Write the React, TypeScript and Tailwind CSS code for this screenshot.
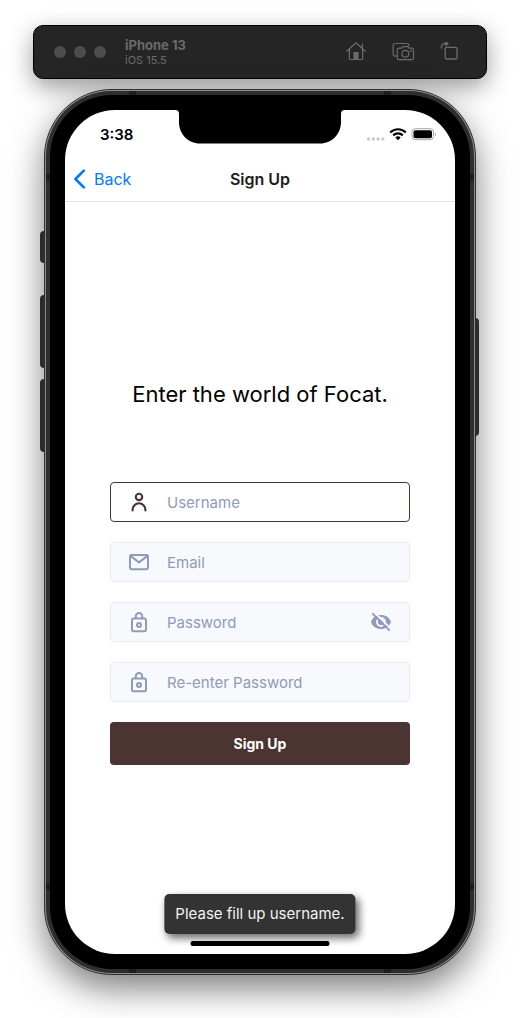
import { useState } from "react";
import type { ReactNode } from "react";

function PersonIcon() {
  return (
    <svg viewBox="0 0 24 24" className="size-6" fill="none" stroke="currentColor" strokeWidth="2.1" strokeLinecap="round" aria-hidden="true">
      <circle cx="12" cy="6.900" r="3.200" />
      <path d="M5.600 20.400v-.7a6.400 6.400 0 0 1 12.800 0v.7" />
    </svg>
  );
}

function MailIcon() {
  return (
    <svg viewBox="0 0 24 24" className="size-6" fill="none" stroke="currentColor" strokeWidth="2" strokeLinejoin="round" aria-hidden="true">
      <rect x="3" y="5" width="18" height="14.200" rx="1.400" />
      <path d="M3.200 5.600 12 12.400l8.800-6.800" />
    </svg>
  );
}

function LockIcon() {
  return (
    <svg viewBox="0 0 24 24" className="size-6" fill="none" stroke="currentColor" strokeWidth="2" aria-hidden="true">
      <rect x="5" y="8.600" width="14" height="12.600" rx="1.600" />
      <path d="M8.800 8.600V6.200a3.200 3.200 0 0 1 6.400 0v2.400" />
      <circle cx="12" cy="15" r="2" />
    </svg>
  );
}

function EyeIcon({ slashed }: { slashed: boolean }) {
  return (
    <svg viewBox="0 0 24 24" className="size-6" fill="none" aria-hidden="true">
      <path d="M2 12C3.600 7.600 7.400 5 12 5s8.400 2.600 10 7c-1.600 4.400-5.400 7-10 7s-8.400-2.600-10-7z" fill="currentColor" />
      <circle cx="12" cy="12" r="4" stroke="#f7f9fd" strokeWidth="1.900" />
      {slashed && (
        <>
          <path d="m5.500 2.300 17 17" stroke="#f7f9fd" strokeWidth="1.800" />
          <path d="m3.300 3.300 17.400 17.400" stroke="currentColor" strokeWidth="1.900" />
        </>
      )}
    </svg>
  );
}

function HomeIcon() {
  return (
    <svg viewBox="0 0 20 20" className="size-5" fill="none" stroke="currentColor" strokeWidth="1.200" strokeLinecap="round" strokeLinejoin="round" aria-hidden="true">
      <path d="M.8 9.200 10 .8l9.200 8.400M3.400 7.200v9.400a.9.9 0 0 0 .9.9h11.400a.9.9 0 0 0 .9-.9V7.200M16.300 6.200V2" />
      <path d="M8 17.200v-6.600h4v6.600z" fill="currentColor" />
    </svg>
  );
}

function ScreenshotIcon() {
  return (
    <svg viewBox="0 0 22 20" className="h-5 w-6" fill="none" stroke="currentColor" strokeWidth="1.200" strokeLinejoin="round" aria-hidden="true">
      <path d="M4.800 14.100H3.100A2 2 0 0 1 1.100 12.100V3.500a2 2 0 0 1 2-2h11.800a2 2 0 0 1 2 2v.8" />
      <path d="M7.100 6.100h2.500l1.200-1.500h5l1.200 1.500h2.700a1.800 1.800 0 0 1 1.800 1.800v8a1.800 1.800 0 0 1-1.800 1.800H7.100a1.800 1.800 0 0 1-1.800-1.800v-8a1.800 1.800 0 0 1 1.800-1.800z" />
      <circle cx="13.400" cy="11.700" r="3.400" />
      <circle cx="18.800" cy="8.700" r=".4" />
    </svg>
  );
}

function RotateIcon() {
  return (
    <svg viewBox="0 0 20 20" className="size-5" fill="none" stroke="currentColor" strokeWidth="1.300" strokeLinecap="round" strokeLinejoin="round" aria-hidden="true">
      <rect x="5.200" y="5.400" width="11.800" height="11.600" rx="1.400" />
      <path d="M1.400 6.100V4.700A3.200 3.200 0 0 1 4.600 1.500h2.400" />
      <path d="M5.700 0 8 1.500 5.700 3.400z" fill="currentColor" />
    </svg>
  );
}

function Notch() {
  return (
    <svg viewBox="0 0 170 34" className="absolute top-0 left-1/2 h-[34px] w-[170px] -translate-x-1/2" aria-hidden="true">
      <path d="M0 0c3 0 4 1.500 4 4v8c0 12 9 21.500 21 21.500h120c12 0 21-9.500 21-21.500V4c0-2.500 1-4 4-4z" fill="#000" />
    </svg>
  );
}

function StatusIcons() {
  return (
    <svg viewBox="0 0 72 16" className="h-4 w-[72px]" aria-hidden="true">
      <g fill="#c9c9c9">
        <circle cx="3.500" cy="12" r="1.700" />
        <circle cx="8.300" cy="12" r="1.700" />
        <circle cx="13.100" cy="12" r="1.700" />
        <circle cx="17.900" cy="12" r="1.700" />
      </g>
      <g fill="none" stroke="#000" strokeWidth="2.200">
        <path d="M25.200 5.500a11 11 0 0 1 15.600 0" />
        <path d="M28.200 8.400a6.800 6.800 0 0 1 9.600 0" />
      </g>
      <path d="m33 13.200-2.700-2.700a3.800 3.800 0 0 1 5.400 0z" />
      <rect x="47" y="1.700" width="21.500" height="11" rx="3.200" fill="none" stroke="#a6a6a6" />
      <rect x="48.500" y="3.200" width="18.500" height="8" rx="1.800" />
      <path d="M70 5.400c1.300.4 1.300 3.200 0 3.600z" fill="#a6a6a6" />
    </svg>
  );
}

type FieldProps = {
  id: string;
  label: string;
  type?: string;
  active?: boolean;
  icon: ReactNode;
  children?: ReactNode;
};

function Field({ id, label, type = "text", active = false, icon, children }: FieldProps) {
  const look = active
    ? "border-[#4b3331] bg-white text-[#4b3331]"
    : "border-[#e8ecf6] bg-[#f7f9fd] text-[#8f9bb8]";
  return (
    <div className={`flex h-10 items-center rounded border px-4 ${look}`}>
      <label htmlFor={id} className="flex">{icon}</label>
      <input
        id={id}
        type={type}
        aria-label={label}
        placeholder={label}
        className="ml-4 h-full min-w-0 flex-1 bg-transparent text-[15px] text-[#222b45] outline-none placeholder:text-[#8f9bb8]"
      />
      {children}
    </div>
  );
}

function SimulatorBar() {
  return (
    <header className="flex h-[54px] w-full max-w-[454px] items-center rounded-[10px] border border-black bg-[#252525] px-5 text-[#6b6b6b] shadow-[0_8px_24px_rgba(0,0,0,0.4)]">
      <div className="flex gap-2">
        <span className="size-3 rounded-full bg-[#4d4d4d]" />
        <span className="size-3 rounded-full bg-[#4d4d4d]" />
        <span className="size-3 rounded-full bg-[#4d4d4d]" />
      </div>
      <div className="ml-[19px] flex-1">
        <p className="text-[13px] leading-4 font-bold">iPhone 13</p>
        <p className="text-[11px] leading-[14px]">iOS 15.5</p>
      </div>
      <div className="flex items-center gap-[25px] pr-[6px]">
        <button type="button" aria-label="Home"><HomeIcon /></button>
        <button type="button" aria-label="Screenshot"><ScreenshotIcon /></button>
        <button type="button" aria-label="Rotate"><RotateIcon /></button>
      </div>
    </header>
  );
}

function FrameDetails() {
  return (
    <div aria-hidden="true">
      <span className="absolute top-[141px] -left-[5px] h-8 w-1 rounded-l-sm bg-[#2b2d2d]" />
      <span className="absolute top-[205px] -left-[5px] h-[73px] w-1 rounded-l-sm bg-[#2b2d2d]" />
      <span className="absolute top-[289px] -left-[5px] h-[73px] w-1 rounded-l-sm bg-[#2b2d2d]" />
      <span className="absolute top-[228px] -right-[4px] h-[118px] w-1 rounded-r-sm bg-[#2b2d2d]" />
      <span className="absolute top-px left-[84px] h-1 w-[7px] bg-[#1d1d1d]" />
      <span className="absolute top-px right-[84px] h-1 w-[7px] bg-[#1d1d1d]" />
      <span className="absolute bottom-px left-[84px] h-1 w-[7px] bg-[#1d1d1d]" />
      <span className="absolute right-[84px] bottom-px h-1 w-[7px] bg-[#1d1d1d]" />
      <span className="absolute top-[84px] left-px h-[7px] w-1 bg-[#1d1d1d]" />
      <span className="absolute top-[84px] right-px h-[7px] w-1 bg-[#1d1d1d]" />
      <span className="absolute bottom-[84px] left-px h-[7px] w-1 bg-[#1d1d1d]" />
      <span className="absolute right-px bottom-[84px] h-[7px] w-1 bg-[#1d1d1d]" />
    </div>
  );
}

export default function App() {
  const [shown, setShown] = useState(false);

  return (
    <div className="flex flex-col items-center gap-[10px] overflow-hidden bg-white px-8 pt-[25px] pb-[43px] font-['Inter','Liberation_Sans',sans-serif]">
      <SimulatorBar />

      <div className="relative w-full max-w-[432px] rounded-[68px] border border-[#303030] bg-[#8c8c8c] p-px shadow-[0_14px_34px_rgba(0,0,0,0.5)]">
        <div className="rounded-[66px] bg-[#2e2e2e] p-1">
          <div className="rounded-[62px] bg-black p-[15px]">
            <main className="relative flex flex-col overflow-hidden rounded-[50px] bg-white">
              <Notch />
              <div className="flex h-12 items-center justify-between pt-[2px] pr-[18px] pl-[35px]">
                <span className="text-[15px] leading-5 font-semibold">3:38</span>
                <StatusIcons />
              </div>
              <nav className="grid h-11 grid-cols-3 items-center border-b border-[#e2e2e2] px-2 pb-[2px]">
                <a href="#back" className="flex items-center gap-2 text-[16px] leading-5 text-[#007aff]">
                  <svg viewBox="0 0 13 20" className="h-5 w-[13px]" fill="none" stroke="currentColor" strokeWidth="2.600" strokeLinecap="round" strokeLinejoin="round" aria-hidden="true">
                    <path d="M10.800 1.600 2.400 10l8.400 8.400" />
                  </svg>
                  Back
                </a>
                <h1 className="text-center text-[16px] leading-5 font-semibold text-[#1c1c1e]">Sign Up</h1>
              </nav>

              <div className="px-[45px] pt-[176px] pb-[189px]">
                <h2 className="text-center text-[22px] leading-8 whitespace-nowrap text-black">Enter the world of Focat.</h2>
                <form className="mt-[72px] flex flex-col gap-5" onSubmit={(e) => e.preventDefault()}>
                  <Field id="username" label="Username" active icon={<PersonIcon />} />
                  <Field id="email" label="Email" type="email" icon={<MailIcon />} />
                  <Field id="password" label="Password" type={shown ? "text" : "password"} icon={<LockIcon />}>
                    <button type="button" aria-label="Toggle password visibility" onClick={() => setShown(!shown)}>
                      <EyeIcon slashed={!shown} />
                    </button>
                  </Field>
                  <Field id="confirm" label="Re-enter Password" type="password" icon={<LockIcon />} />
                  <button type="submit" className="h-[43px] rounded bg-[#4b3432] text-[14px] font-bold text-white">
                    Sign Up
                  </button>
                </form>
              </div>

              <p role="status" className="absolute bottom-5 left-1/2 -translate-x-1/2 rounded-[5px] bg-[#333333] px-[11px] py-[10px] text-[15px] leading-5 whitespace-nowrap text-[#f2f2f2] shadow-[3px_4px_8px_rgba(0,0,0,0.6)]">
                Please fill up username.
              </p>
              <span className="absolute bottom-2 left-1/2 h-[5px] w-[139px] -translate-x-1/2 rounded-full bg-black" />
            </main>
          </div>
        </div>
        <FrameDetails />
      </div>
    </div>
  );
}
